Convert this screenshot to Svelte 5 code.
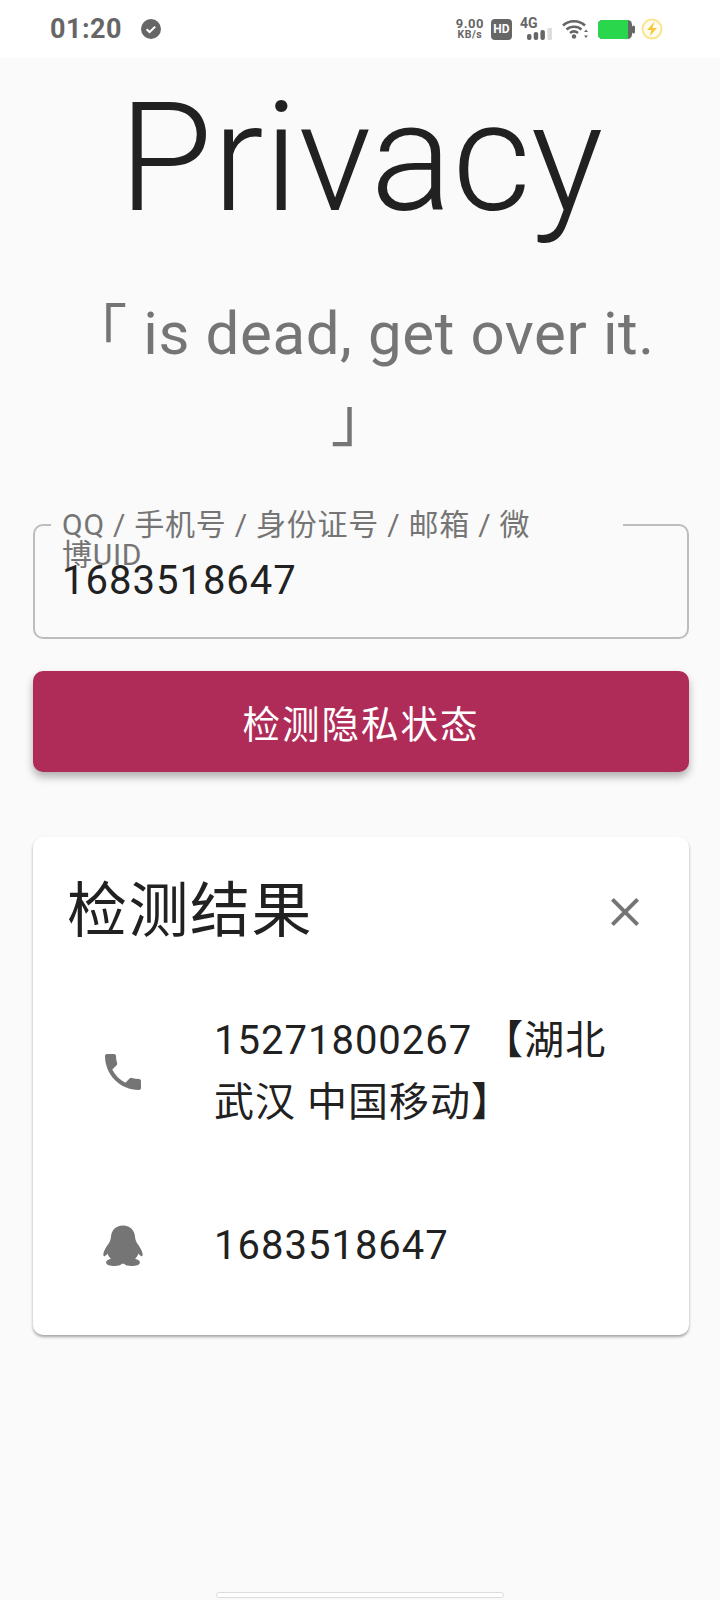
<script>
	const results = [
		{ icon: 'phone', text: '15271800267 【湖北武汉 中国移动】' },
		{ icon: 'qq', text: '1683518647' }
	];
</script>

<div class="page">
	<header class="status">
		<div class="left">
			<span class="time">01:20</span>
			<svg class="check" viewBox="0 0 20 20" width="20" height="20">
				<circle cx="10" cy="10" r="10" fill="#666" />
				<path d="M5.6 10.2l3 2.8 5.6-5.4" fill="none" stroke="#fff" stroke-width="2" />
			</svg>
		</div>
		<div class="right">
			<div class="speed"><span>9.00</span><span class="unit">KB/s</span></div>
			<div class="hd">HD</div>
			<div class="net">
				<span class="g">4G</span>
				<svg viewBox="0 0 25 12" width="25" height="12">
					<rect x="0" y="6" width="4.500" height="6" rx="2" fill="#666" />
					<rect x="6.700" y="4" width="4.500" height="8" rx="2" fill="#666" />
					<rect x="13.400" y="2" width="4.500" height="10" rx="2" fill="#666" />
					<rect x="20.500" y="0" width="4.500" height="12" rx="1" fill="#ddd" />
				</svg>
			</div>
			<svg class="wifi" viewBox="0 0 26 20" width="26" height="20">
				<path d="M1 6.500C7 .8 17 .8 23 6.500M4.500 10.500c4-3.600 11-3.600 15 0M8 14c2.400-2 5.600-2 8 0" fill="none" stroke="#666" stroke-width="2.600" />
				<circle cx="12" cy="17.500" r="2.200" fill="#666" />
				<path d="M24 10.500l2 2.500h-4zM24 19l2-2.500h-4z" fill="#666" />
			</svg>
			<svg class="batt" viewBox="0 0 37 19" width="37" height="19">
				<rect x="0" y="0" width="34" height="19" rx="4.500" fill="#666" />
				<path d="M4.500 0H30v19H4.500A4.500 4.500 0 0 1 0 14.500v-10A4.500 4.500 0 0 1 4.500 0z" fill="#2ad64c" />
				<rect x="34" y="5.500" width="3" height="8" rx="1.500" fill="#666" />
			</svg>
			<svg class="bolt" viewBox="0 0 22 22" width="22" height="22">
				<circle cx="11" cy="11" r="9.500" fill="#fffdf2" stroke="#fbe58c" stroke-width="2" />
				<path d="M13.500 3.500L6 12h4.500L8.500 18.500 16 10h-4.500z" fill="#f7c93a" />
			</svg>
		</div>
	</header>

	<main class="content">
		<h1>Privacy</h1>
		<p class="quote">「 is dead, get over it. 」</p>

		<div class="field">
			<span class="notch"></span>
			<label for="uid">QQ / 手机号 / 身份证号 / 邮箱 / 微博UID</label>
			<div id="uid" class="value">1683518647</div>
		</div>

		<button class="submit">检测隐私状态</button>

		<section class="card">
			<div class="card-head">
				<h2>检测结果</h2>
				<svg class="close" viewBox="0 0 24 24" width="48" height="48">
					<path d="M19 6.410L17.590 5 12 10.590 6.410 5 5 6.410 10.590 12 5 17.590 6.410 19 12 13.410 17.590 19 19 17.590 13.410 12z" fill="#757575" />
				</svg>
			</div>
			<ul>
				{#each results as row}
					<li>
						<span class="lead">
							{#if row.icon === 'phone'}
								<svg viewBox="0 0 24 24" width="48" height="48">
									<path d="M6.620 10.790c1.440 2.830 3.760 5.140 6.590 6.590l2.200-2.200c.27-.27.67-.36 1.020-.24 1.120.37 2.330.57 3.570.57.55 0 1 .45 1 1V20c0 .55-.45 1-1 1-9.390 0-17-7.610-17-17 0-.55.45-1 1-1h3.500c.55 0 1 .45 1 1 0 1.250.2 2.450.57 3.570.11.35.03.74-.25 1.020l-2.200 2.200z" fill="#757575" />
								</svg>
							{:else}
								<svg viewBox="2 0 44 48" preserveAspectRatio="none" width="48" height="48">
									<path d="M24 3.500c-7 0-10.500 5-11 11-.2 2.500-.6 4-1.800 6.500-2 3-5 7.500-5.200 11.500-.1 1.700.6 2 1.500 1.400.8-.5 1.700-1.400 2.400-2.500.5 2 1.500 3.800 3 5.300-2.600.7-4.400 2-4.400 3.800 0 2.500 3.700 3.500 7.500 3.500 3.300 0 6-.7 7-2.200h2c1 1.500 3.700 2.200 7 2.200 3.800 0 7.500-1 7.500-3.500 0-1.800-1.800-3.100-4.400-3.800 1.500-1.500 2.500-3.300 3-5.300.7 1.100 1.600 2 2.400 2.500.9.6 1.600.3 1.500-1.400-.2-4-3.200-8.500-5.200-11.500-1.200-2.500-1.600-4-1.800-6.500-.5-6-4-11-11-11z" fill="#757575" />
								</svg>
							{/if}
						</span>
						<span class="text">{row.text}</span>
					</li>
				{/each}
			</ul>
		</section>
	</main>

	<div class="home"></div>
</div>

<style>
	:global(body) {
		background: #fafafa;
	}

	.page {
		position: relative;
		height: 1600px;
		overflow: hidden;
		background: #fafafa;
		font-family: Roboto, "Noto Sans CJK SC", sans-serif;
		color: #212121;
	}

	.status {
		display: flex;
		justify-content: space-between;
		align-items: center;
		height: 58px;
		padding: 0 57px 0 50px;
		background: #fff;
		color: #666;
	}

	.left,
	.right {
		display: flex;
		align-items: center;
	}

	.time {
		font-size: 27px;
		font-weight: 700;
		letter-spacing: 0.5px;
	}

	.check {
		margin-left: 19px;
	}

	.speed {
		display: flex;
		flex-direction: column;
		align-items: center;
		font-size: 13px;
		font-weight: 700;
		line-height: 11px;
		letter-spacing: 0.5px;
	}

	.unit {
		font-size: 10.500px;
	}

	.hd {
		margin-left: 7px;
		width: 21px;
		height: 21px;
		border-radius: 4px;
		background: #666;
		color: #fff;
		font-size: 12px;
		font-weight: 700;
		line-height: 21px;
		text-align: center;
	}

	.net {
		margin-left: 8px;
		width: 32px;
		height: 22px;
		position: relative;
	}

	.g {
		position: absolute;
		left: 0;
		top: -3px;
		font-size: 14px;
		font-weight: 700;
	}

	.net svg {
		position: absolute;
		right: 0;
		bottom: 0;
	}

	.wifi {
		margin-left: 10px;
	}

	.batt {
		margin-left: 10px;
	}

	.bolt {
		margin-left: 6px;
	}

	.content {
		display: flex;
		flex-direction: column;
		padding: 0 31px 0 33px;
	}

	h1 {
		margin: 0;
		font-size: 152.500px;
		font-weight: 300;
		line-height: 200px;
		text-align: center;
	}

	.quote {
		margin: 32px 0 0;
		padding: 0 24px;
		font-size: 60px;
		line-height: 87px;
		letter-spacing: 0.6px;
		color: #757575;
		text-align: center;
	}

	.field {
		position: relative;
		height: 115px;
		margin-top: 60px;
		box-sizing: border-box;
		border: 2px solid #bdbdbd;
		border-radius: 10px;
	}

	.notch {
		position: absolute;
		left: 16px;
		top: -2px;
		width: 572px;
		height: 2px;
		background: #fafafa;
	}

	label {
		position: absolute;
		left: 27px;
		right: 138px;
		top: -16px;
		font-size: 30px;
		line-height: 30px;
		letter-spacing: 0.75px;
		color: #757575;
	}

	.value {
		position: absolute;
		left: 27px;
		top: 30px;
		font-size: 40px;
		line-height: 50px;
		letter-spacing: 1px;
	}

	.submit {
		height: 101px;
		margin-top: 32px;
		border: none;
		border-radius: 10px;
		background: #af2c58;
		color: #fff;
		font-family: inherit;
		font-size: 37.500px;
		letter-spacing: 2px;
		box-shadow: 0 5px 8px rgba(0, 0, 0, 0.3);
	}

	.card {
		height: 498px;
		margin-top: 65px;
		border-radius: 10px;
		background: #fff;
		box-shadow: 0 2px 3px rgba(0, 0, 0, 0.35);
	}

	.card-head {
		display: flex;
		justify-content: space-between;
		align-items: center;
		padding: 40px 40px 0 34px;
	}

	h2 {
		margin: 0;
		font-size: 60px;
		font-weight: 400;
		line-height: 70px;
		letter-spacing: 1.500px;
	}

	ul {
		margin: 63px 0 0;
		padding: 0;
		list-style: none;
	}

	li {
		display: flex;
		align-items: center;
		min-height: 124px;
		margin-bottom: 50px;
		padding: 0 65px 0 66px;
	}

	.lead {
		display: flex;
		flex: 0 0 48px;
		margin-right: 67px;
	}

	.text {
		font-size: 40px;
		line-height: 62px;
		letter-spacing: 1px;
	}

	.home {
		position: absolute;
		left: 216px;
		top: 1592px;
		width: 288px;
		height: 6px;
		box-sizing: border-box;
		border: 1px solid #ddd;
		border-radius: 3px;
		background: #fff;
	}
</style>
